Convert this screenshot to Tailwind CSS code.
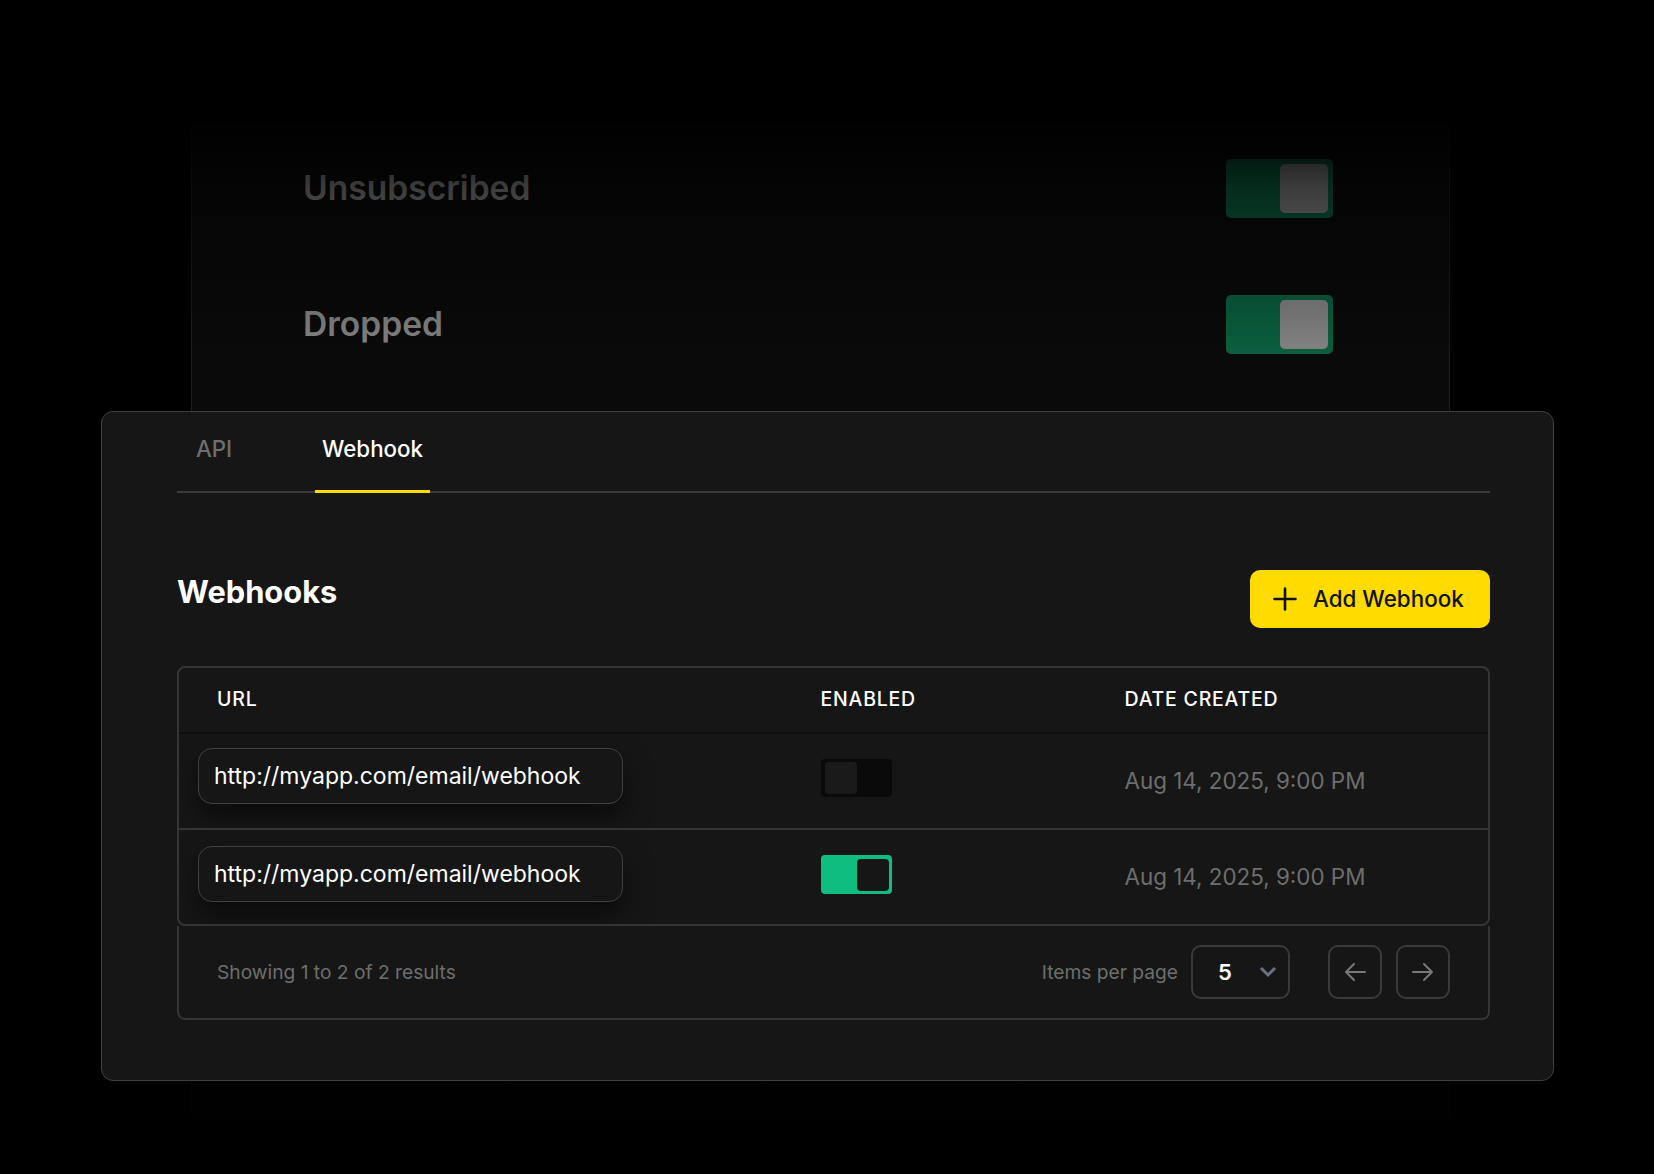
<!DOCTYPE html>
<html lang="en">
<head>
  <meta charset="UTF-8" />
  <meta name="viewport" content="width=device-width, initial-scale=1.0"/>
  <title>Webhooks</title>
  <script src="https://cdn.jsdelivr.net/npm/@tailwindcss/browser@4"></script>
</head>
<body class="bg-black font-['Inter',sans-serif] text-white">

  <div class="relative w-[1654px] h-[1174px] overflow-hidden bg-black">

    <!-- faded settings panel behind the card -->
    <section class="ml-[191px] mt-[125px] w-[1259px] h-[1005px] pt-[34px] border-x border-[#1c1c1c] bg-[#0a0a0a] pl-[111px] pr-[116px]">
      <div class="flex items-center justify-between h-[59px]">
        <span class="text-[33.6px] font-semibold text-[#858585]">Unsubscribed</span>
        <div class="flex justify-end items-center w-[107px] h-[59px] p-[5px] rounded-[5px] bg-[#0b6040]">
          <div class="w-[48px] h-[49px] rounded-[5px] bg-[#858585]"></div>
        </div>
      </div>
      <div class="flex items-center justify-between h-[59px] mt-[77px]">
        <span class="text-[33.6px] font-semibold text-[#858585]">Dropped</span>
        <div class="flex justify-end items-center w-[107px] h-[59px] p-[5px] rounded-[5px] bg-[#0b6040]">
          <div class="w-[48px] h-[49px] rounded-[5px] bg-[#858585]"></div>
        </div>
      </div>
    </section>

    <!-- fades -->
    <div class="absolute left-0 right-0 top-[125px] h-[233px] bg-linear-to-b from-black/95 via-black/55 via-27% to-transparent"></div>
    <div class="absolute left-0 right-0 top-[1040px] h-[100px] bg-linear-to-b from-black/75 to-black"></div>

    <!-- webhook card -->
    <main class="absolute left-[101px] top-[411px] w-[1453px] h-[670px] rounded-xl border border-[#404040] bg-[#161616] pl-[75px] pr-[63px]">

      <nav class="flex h-[81px] border-b-2 border-[#3a3a3a]">
        <a class="w-[138px] pl-[19px] pt-[20px] text-[22.3px] font-medium text-[#6e6e6e]">API</a>
        <a class="w-[115px] h-[81px] pt-[20px] text-center text-[22.3px] font-medium text-white border-b-[3px] border-[#ffdb00]">Webhook</a>
      </nav>

      <div class="flex justify-between items-start mt-[77px]">
        <h2 class="text-[30.8px] leading-[44px] font-bold">Webhooks</h2>
        <button class="flex items-center gap-[16px] w-[240px] h-[58px] pl-[23px] rounded-[10px] bg-[#ffdb00] text-[#111] text-[22.4px] font-medium">
          <svg class="w-[24px] h-[24px]" viewBox="0 0 24 24" fill="none" stroke="#111" stroke-width="2.6" stroke-linecap="round"><path d="M12 1.5v21M1.5 12h21"/></svg>
          Add Webhook
        </button>
      </div>

      <div class="mt-[38px] w-[1313px]">
        <!-- table -->
        <div class="rounded-lg border-2 border-[#353535] overflow-hidden">
          <div class="grid grid-cols-[641.5px_304px_1fr] items-center h-[66px] border-b-2 border-[#0e0e0e] text-[19.5px] font-medium tracking-[0.04em] uppercase">
            <span class="pl-[38px]">URL</span>
            <span>Enabled</span>
            <span>Date created</span>
          </div>
          <div class="grid grid-cols-[641.5px_304px_1fr] h-[96px] border-b-2 border-[#353535] overflow-hidden">
            <div class="pl-[19px] pt-[14px]">
              <div class="flex items-center w-[425px] h-[56px] pl-[15px] rounded-[14px] border border-[#404040] text-[23px] shadow-[0_14px_28px_rgba(0,0,0,0.5)]">http://myapp.com/email/webhook</div>
            </div>
            <div class="pt-[25px]">
              <div class="flex items-center w-[71px] h-[38px] p-[4px] rounded-[4px] bg-[#0a0a0a]">
                <div class="w-[32px] h-[32px] rounded-[4px] bg-[#1a1a1a]"></div>
              </div>
            </div>
            <div class="flex items-center text-[22.4px] text-[#6e6e6e]">Aug 14, 2025, 9:00 PM</div>
          </div>
          <div class="grid grid-cols-[641.5px_304px_1fr] h-[94px] overflow-hidden">
            <div class="pl-[19px] pt-[16px]">
              <div class="flex items-center w-[425px] h-[56px] pl-[15px] rounded-[14px] border border-[#404040] text-[23px] shadow-[0_14px_28px_rgba(0,0,0,0.5)]">http://myapp.com/email/webhook</div>
            </div>
            <div class="pt-[25px]">
              <div class="flex justify-end items-center w-[71px] h-[39px] p-[3px] rounded-[4px] bg-[#10bd80]">
                <div class="w-[32px] h-[32px] rounded-[4px] bg-[#161616]"></div>
              </div>
            </div>
            <div class="flex items-center text-[22.4px] text-[#6e6e6e]">Aug 14, 2025, 9:00 PM</div>
          </div>
        </div>

        <!-- pagination -->
        <div class="flex items-center justify-between h-[94px] pl-[38px] pr-[38px] rounded-b-lg border-x-2 border-b-2 border-[#353535]">
          <span class="text-[19.2px] text-[#6e6e6e]">Showing 1 to 2 of 2 results</span>
          <div class="flex items-center">
            <span class="text-[19.2px] text-[#6e6e6e]">Items per page</span>
            <div class="relative flex items-center w-[99px] h-[54px] ml-[13px] pl-[25px] rounded-[10px] border-2 border-[#3a3a3a] text-[22px] font-semibold">
              5
              <svg class="absolute right-[11px] top-[17px] w-[18px] h-[16px]" viewBox="0 0 18 16" fill="none" stroke="#6b7280" stroke-width="3"><path d="M2 4l7 7 7-7"/></svg>
            </div>
            <button class="flex items-center justify-center w-[54px] h-[54px] ml-[38px] rounded-[10px] border-2 border-[#3a3a3a]">
              <svg class="w-[24px] h-[24px]" viewBox="0 0 24 24" fill="none" stroke="#787878" stroke-width="2" stroke-linecap="round" stroke-linejoin="round"><path d="M22 12H3M11 4l-8 8 8 8"/></svg>
            </button>
            <button class="flex items-center justify-center w-[54px] h-[54px] ml-[14px] rounded-[10px] border-2 border-[#3a3a3a]">
              <svg class="w-[24px] h-[24px]" viewBox="0 0 24 24" fill="none" stroke="#787878" stroke-width="2" stroke-linecap="round" stroke-linejoin="round"><path d="M2 12h19M13 4l8 8-8 8"/></svg>
            </button>
          </div>
        </div>
      </div>
    </main>
  </div>

</body>
</html>
